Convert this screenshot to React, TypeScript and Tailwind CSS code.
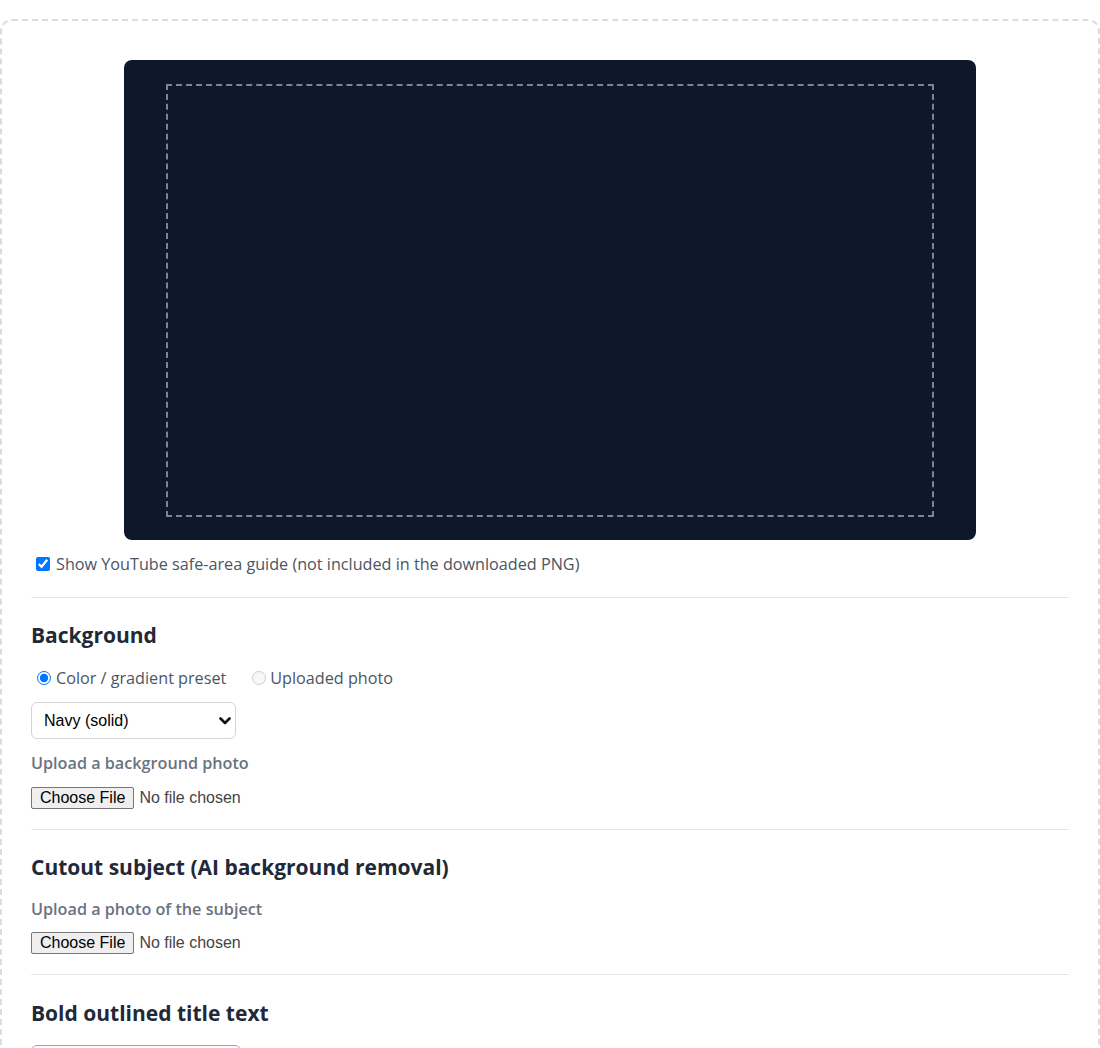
import { useState } from "react";

const presets = ["Navy (solid)", "Black (solid)", "Sunset gradient", "Ocean gradient", "Neon gradient"];

function FilePicker() {
  return (
    <input
      type="file"
      className="block h-[22px] font-['Liberation_Sans',Arial,sans-serif] text-[16px] leading-[20px] text-[#444] file:mr-[5px] file:h-[22px] file:rounded-[2px] file:border file:border-[#767676] file:bg-[#efefef] file:px-[8px] file:text-[16px] file:leading-[20px] file:text-black"
    />
  );
}

export default function App() {
  const [guide, setGuide] = useState(true);
  const [bgMode, setBgMode] = useState("preset");
  const [preset, setPreset] = useState(presets[0]);

  return (
    <div className="min-h-[1048px] bg-white pt-[19px] font-['Open_Sans','Noto_Sans',sans-serif]">
      <div className="rounded-[12px] border-2 border-dashed border-[#d9dde3] px-[29px] pb-10 pt-[39px]">
        <div className="flex justify-center">
          <div className="relative h-[480px] w-[852px] rounded-[8px] bg-[#0f172a]">
            {guide && (
              <div className="absolute left-[42px] right-[42px] top-[24px] bottom-[23px] border-2 border-dashed border-[#7d8593]" />
            )}
          </div>
        </div>

        <label className="mt-[12px] flex h-6 items-center gap-[6px] pl-[5px] text-[16.2px] text-[#4b5563]">
          <input
            type="checkbox"
            checked={guide}
            onChange={(e) => setGuide(e.target.checked)}
            className="h-[14px] w-[14px] accent-[#0075ff]"
          />
          Show YouTube safe-area guide (not included in the downloaded PNG)
        </label>

        <hr className="mt-[21px] border-t border-[#e5e7eb]" />

        <h2 className="mt-[23px] text-[21px] font-bold leading-7 text-[#1f2937]">Background</h2>
        <div className="mt-[17px] flex h-6 items-center gap-[26px] pl-[6px] text-[16.2px] text-[#4b5563]">
          <label className="flex items-center gap-[5px]">
            <input
              type="radio"
              name="bg"
              checked={bgMode === "preset"}
              onChange={() => setBgMode("preset")}
              className="h-[14px] w-[14px] accent-[#0075ff]"
            />
            Color / gradient preset
          </label>
          <label className="flex items-center gap-[4px]">
            <input type="radio" name="bg" disabled checked={bgMode === "photo"} onChange={() => setBgMode("photo")} className="h-[14px] w-[14px]" />
            Uploaded photo
          </label>
        </div>
        <div className="relative mt-[12px] w-[205px]">
          <select
            value={preset}
            onChange={(e) => setPreset(e.target.value)}
            className="block h-[37px] w-full appearance-none rounded-[6px] border border-[#d1d5db] bg-white pl-[12px] pr-8 font-['Liberation_Sans',Arial,sans-serif] text-[16px] text-black"
          >
            {presets.map((p) => (
              <option key={p}>{p}</option>
            ))}
          </select>
          <svg className="pointer-events-none absolute right-[5px] top-[15px] h-[8px] w-[12px]" viewBox="0 0 12 8" fill="none">
            <path d="M1.5 1.5 6 6l4.5-4.5" stroke="#111" strokeWidth="2.6" strokeLinecap="round" strokeLinejoin="round" />
          </svg>
        </div>
        <div className="mt-[12px] h-6 text-[16.2px] font-semibold leading-6 text-[#6b7280]">Upload a background photo</div>
        <div className="mt-[12px]">
          <FilePicker />
        </div>

        <hr className="mt-[20px] border-t border-[#e5e7eb]" />

        <h2 className="mt-[23px] text-[21px] font-bold leading-7 text-[#1f2937]">Cutout subject (AI background removal)</h2>
        <div className="mt-[16px] h-6 text-[16.2px] font-semibold leading-6 text-[#6b7280]">Upload a photo of the subject</div>
        <div className="mt-[11px]">
          <FilePicker />
        </div>

        <hr className="mt-[20px] border-t border-[#e5e7eb]" />

        <h2 className="mt-[24px] text-[21px] font-bold leading-7 text-[#1f2937]">Bold outlined title text</h2>
        <input
          type="text"
          className="mt-[18px] block h-[37px] w-[210px] rounded-[6px] border border-[#9ca3af] px-3 font-['Liberation_Sans',Arial,sans-serif] text-[16px]"
        />
      </div>
    </div>
  );
}
